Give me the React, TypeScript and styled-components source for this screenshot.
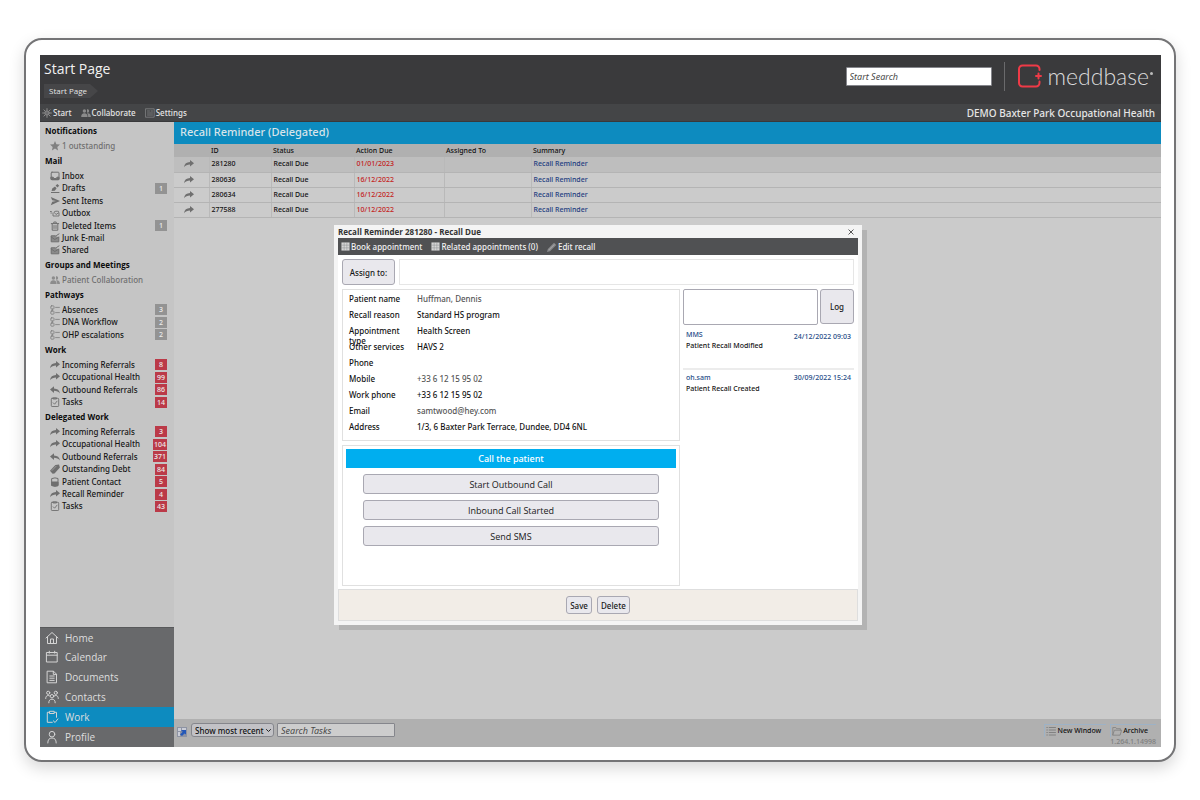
import React from "react";
import styled, { createGlobalStyle, css } from "styled-components";

const Global = createGlobalStyle`
  *, *::before, *::after { box-sizing: border-box; }
  body { margin: 0; background: #fff; font-family: "Open Sans", "Noto Sans", sans-serif; font-weight: 500; color: #111; }
  button, input, textarea, select { font-family: inherit; margin: 0; }
  h1, h2, h3, ul, dl, dd, dt, p { margin: 0; padding: 0; font-weight: inherit; }
  ul { list-style: none; }
  a { color: inherit; text-decoration: none; }
`;

const wide = css`font-family: "Noto Sans", "Open Sans", sans-serif;`;

const Page = styled.div`
  min-height: 100vh;
  padding: 38px 24px;
  display: flex;
`;
const Frame = styled.div`
  flex: 1;
  display: flex;
  padding: 15px 13px 13px 14px;
  border: 2px solid #747476;
  border-radius: 18px;
  background: #fff;
  box-shadow: 0 6px 16px rgba(0, 0, 0, 0.16);
`;
const AppShell = styled.div`
  flex: 1;
  position: relative;
  display: flex;
  flex-direction: column;
  min-width: 0;
  background: #cbcbcb;
`;

const Header = styled.header`
  display: flex;
  justify-content: space-between;
  height: 49px;
  padding: 0 8px 0 4px;
  background: #3a3a3c;
  color: #f2f2f2;
`;
const PageTitle = styled.h1`
  && { font-size: 14px; font-weight: 500; }
  line-height: 20px;
  padding-top: 4px;
  margin-bottom: 5px;
`;
const Crumb = styled.a`
  display: block;
  width: 54px;
  padding: 0 5px;
  font-size: 8px;
  line-height: 14px;
  background: #464648;
  color: #e4e4e4;
  clip-path: polygon(0 0, 46px 0, 100% 50%, 46px 100%, 0 100%);
`;
const HeaderRight = styled.div`
  display: flex;
  align-items: center;
  height: 42px;
`;
const TextInput = styled.input<{ $w: number; $h: number; $bg: string }>`
  width: ${p => p.$w}px;
  height: ${p => p.$h}px;
  padding: 0 3px;
  border: 1px solid #85868c;
  border-radius: 1px;
  background: ${p => p.$bg};
  ${wide}
  font-size: 9px;
  font-style: italic;
  &::placeholder { color: #4a4a4a; opacity: 1; }
`;
const Rule = styled.span`
  width: 1px;
  height: 29px;
  margin: 0 13px 0 12px;
  background: #6a6a6c;
`;
const Brand = styled.a`
  display: flex;
  align-items: center;
  gap: 6px;
  color: #dcdcdc;
  font-family: Lato, sans-serif;
  font-weight: 300;
  font-size: 23px;
  line-height: 28px;
`;
const BrandDot = styled.span`
  width: 3px;
  height: 3px;
  margin: 0 0 6px -5px;
  border-radius: 50%;
  background: #bbb;
`;

const MenuBar = styled.nav`
  display: flex;
  align-items: center;
  gap: 9px;
  height: 18px;
  padding: 0 6px 0 2px;
  background: #444547;
  border-bottom: 1px solid #39393b;
  color: #e6e6e6;
  ${wide}
  font-size: 8px;
  line-height: 16px;
`;
const MenuLink = styled.a`
  display: flex;
  align-items: center;
  gap: 1px;
`;
const Tenant = styled.span`
  margin-left: auto;
  font-size: 10px;
`;

const Columns = styled.div`
  flex: 1;
  display: flex;
`;
const Sidebar = styled.aside`
  width: 134px;
  flex: none;
  display: flex;
  flex-direction: column;
  justify-content: space-between;
  background: #c5c5c5;
`;
const GroupTitle = styled.h2`
  && { font-weight: 700; }
  padding-left: 5px;
  font-size: 8px;
  line-height: 17px;
  color: #0c0c0c;
`;
const Item = styled.li<{ $muted?: boolean }>`
  display: flex;
  align-items: center;
  height: 12px;
  padding: 0 7px 0 10px;
  ${wide}
  font-size: 8px;
  line-height: 12px;
  color: ${p => (p.$muted ? "#6f6f6f" : "#161616")};
  &:nth-child(odd) { height: 13px; }
  &:nth-child(7) { height: 12px; }
  svg { margin-right: 2px; }
  a { flex: 1; white-space: nowrap; }
`;
const Badge = styled.span<{ $red?: boolean }>`
  min-width: 12px;
  height: 11px;
  padding: 0 1px;
  font-size: 7px;
  line-height: 11px;
  text-align: center;
  color: #ececec;
  background: ${p => (p.$red ? "#bb3a48" : "#939393")};
`;
const MainNav = styled.nav`
  display: flex;
  flex-direction: column;
  background: #68696b;
  border-top: 1px solid #58595b;
`;
const NavLink = styled.a<{ $on?: boolean }>`
  display: flex;
  align-items: center;
  gap: 6px;
  height: 20px;
  padding-left: 5px;
  color: #dedede;
  font-size: 10px;
  &:first-child { height: 19px; }
  ${p => p.$on && css`background: #0d8bbf;`}
`;

const Main = styled.main`
  flex: 1;
  min-width: 0;
  display: flex;
  flex-direction: column;
`;
const ListTitle = styled.h2`
  && { font-size: 11px; }
  padding: 0 0 2px 6px;
  background: #0d8bbf;
  color: #d8e4ea;
  ${wide}
  line-height: 20px;
`;
const Table = styled.table`
  width: 100%;
  table-layout: fixed;
  border-collapse: collapse;
  ${wide}
  font-size: 7px;
  line-height: 12px;
  th { height: 13px; padding: 0 2px; font-weight: 500; text-align: left; background: #b0b0b0; }
  td { height: 15px; padding: 0 2px; border-bottom: 1px solid #b4b4b4; border-left: 1px solid #b9b9b9; }
  td:first-child { border-left: 0; padding-left: 10px; }
  tbody tr:first-child { background: #bebebe; }
  svg { display: block; }
`;
const Due = styled.td`color: #c31c1c;`;
const SummaryLink = styled.a`color: #1c3c80;`;

const Footer = styled.footer`
  display: flex;
  align-items: flex-start;
  height: 28px;
  margin-top: auto;
  padding: 4px 5px 0 3px;
  background: #b0b0b0;
  font-size: 8px;
  > svg { margin: 4px 4px 0 0; }
`;
const Filter = styled.select`
  appearance: none;
  width: 83px;
  height: 14px;
  margin-right: 3px;
  padding: 0 3px;
  border: 1px solid #85868c;
  border-radius: 3px;
  background: #c2c2c6;
  color: #111;
  ${wide}
  font-size: 8px;
  font-weight: 500;
`;
const FilterWrap = styled.label`
  position: relative;
  display: flex;
  svg { position: absolute; right: 6px; top: 5px; }
`;
const FootLinks = styled.div`
  margin-left: auto;
  display: grid;
  grid-template-columns: auto auto;
  column-gap: 4px;
  margin-top: 1px;
  ${wide}
  font-size: 7px;
`;
const FootLink = styled.a`
  display: flex;
  align-items: center;
  gap: 1px;
  padding: 0 5px 0 1px;
  border-top: 1px solid #9db2c6;
  border-left: 1px solid #9db2c6;
  line-height: 12px;
`;
const Version = styled.span`
  grid-column: 2;
  color: #7e7e7e;
  line-height: 9px;
`;

const Overlay = styled.div`
  position: absolute;
  inset: 0;
  display: flex;
  justify-content: center;
  align-items: flex-start;
  padding: 170px 5px 0 0;
`;
const Dialog = styled.section`
  width: 528px;
  padding: 0 4px 4px;
  background: #f4f4f4;
  box-shadow: 5px 5px 0 #b3b3b3;
  font-size: 8px;
`;
const DialogHead = styled.div`
  display: flex;
  justify-content: space-between;
  align-items: center;
  height: 13px;
`;
const DialogTitle = styled.h2`
  && { font-size: 8px; font-weight: 700; }
  color: #333;
  line-height: 13px;
`;
const Close = styled.button`
  padding: 0 4px;
  border: 0;
  background: none;
  line-height: 0;
`;
const DialogBar = styled.div`
  display: flex;
  align-items: center;
  gap: 9px;
  height: 17px;
  padding: 0 3px;
  background: #505153;
`;
const BarButton = styled.button`
  display: flex;
  align-items: center;
  gap: 1px;
  padding: 0;
  border: 0;
  background: none;
  color: #f2f2f2;
  ${wide}
  font-size: 8px;
  font-weight: 500;
`;
const DialogBody = styled.div`
  padding: 4px 4px 3px;
  background: #fff;
`;
const Button = styled.button`
  border: 1px solid #a9a8b2;
  border-radius: 3px;
  background: #e9e8ed;
  color: #181818;
  ${wide}
  font-size: 8px;
  font-weight: 500;
`;
const AssignRow = styled.div`
  display: flex;
  gap: 4px;
  margin-bottom: 4px;
`;
const AssignButton = styled(Button)`
  width: 53px;
  height: 26px;
  padding: 0;
`;
const AssignInput = styled.input`
  flex: 1;
  min-width: 0;
  border: 1px solid #e6e6e6;
`;
const Split = styled.div`
  display: grid;
  grid-template-columns: 338px minmax(0, 1fr);
  gap: 3px;
`;
const Stack = styled.div`
  display: flex;
  flex-direction: column;
  gap: 4px;
`;
const Details = styled.dl`
  padding: 3px 6px;
  border: 1px solid #e0e0e0;
  ${wide}
`;
const Detail = styled.div<{ $soft?: boolean }>`
  display: flex;
  height: 16px;
  padding-top: 1px;
  line-height: 10px;
  dt { width: 56px; margin-right: 12px; overflow: visible; }
  dd { color: ${p => (p.$soft ? "#555" : "#111")}; }
`;
const CallPanel = styled.section`
  display: flex;
  flex-direction: column;
  gap: 6px;
  min-height: 141px;
  padding: 3px;
  border: 1px solid #e0e0e0;
`;
const CallTitle = styled.h3`
  && { font-size: 9px; }
  background: #00aeef;
  color: #fff;
  ${wide}
  line-height: 19px;
  text-align: center;
`;
const CallButton = styled(Button)`
  height: 20px;
  margin: 0 17px;
  padding: 0;
  font-family: "Open Sans", "Noto Sans", sans-serif;
  font-size: 9px;
`;
const LogForm = styled.div`
  display: flex;
  gap: 2px;
  margin-bottom: 4px;
  textarea { flex: 1; min-width: 0; height: 36px; border: 1px solid #a9a8b2; border-radius: 2px; resize: none; }
`;
const LogButton = styled(Button)`
  width: 34px;
  height: 35px;
  padding: 0;
`;
const Entry = styled.li<{ $first?: boolean }>`
  display: grid;
  grid-template-columns: 1fr auto;
  align-content: start;
  height: ${p => (p.$first ? 41 : 30)}px;
  margin-bottom: 2px;
  padding: 0 3px;
  border-bottom: ${p => (p.$first ? "2px solid #ececec" : "0")};
  ${wide}
  font-size: 7px;
  line-height: 11px;
  a { color: #1d4a86; }
  p { grid-column: 1 / -1; }
`;
const Stamp = styled.time<{ $first?: boolean }>`
  height: 11px;
  padding-top: ${p => (p.$first ? 2 : 0)}px;
  color: #1d4a86;
`;
const DialogFoot = styled.div`
  display: flex;
  justify-content: center;
  align-items: center;
  gap: 5px;
  height: 32px;
  background: #f2ede7;
  border: 1px solid #dedede;
`;
const SmallButton = styled(Button)`
  height: 18px;
  padding: 0 3px;
`;

type GlyphProps = { size?: number; box?: string; color?: string; children: React.ReactNode; fill?: boolean; sw?: number };
const Glyph = ({ size = 10, box = "0 0 10 10", color = "#6f6f6f", fill, sw = 1, children }: GlyphProps) => (
  <svg width={size} height={size} viewBox={box} fill={fill ? color : "none"} stroke={fill ? "none" : color}
    strokeWidth={sw} strokeLinejoin="round" strokeLinecap="round" aria-hidden="true">{children}</svg>
);

const Forward = () => <Glyph fill><path d="M0 8.2C.4 4.8 2.6 3.1 6 3V1l4 3.3L6 7.6V5.4C3.5 5.400 1.4 6.200 0 8.200z" /></Glyph>;
const Back = () => <Glyph fill><path d="M10 8.600C9.600 5.200 7.400 3.500 4 3.400V1.200L0 4.600 4 8V5.800c2.500 0 4.600.8 6 2.800z" /></Glyph>;
const Star = () => <Glyph fill color="#808080"><path d="M5 0l1.400 3.300 3.600.3-2.700 2.400.8 3.500L5 7.600 1.900 9.500l.8-3.500L0 3.600l3.600-.3z" /></Glyph>;
const InboxIcon = () => <Glyph><rect x="1.200" y="1.200" width="7.800" height="7.600" rx=".8" /><path d="M1.200 6.200h2l.8 1.300h2.200L7 6.200h2v2.300H1.400z" fill="#6f6f6f" /></Glyph>;
const Pen = () => <Glyph fill><path d="M1 9h8.400v.9H1zM1.600 8l.6-2.600L5 3.600l1.600 1.600-1.800 2.500zM5.600 2.600L7.400.9l1.800 1.800-1.800 1.800z" /></Glyph>;
const Send = () => <Glyph fill><path d="M.8 1L10 5 .8 9.200l1.400-3.500L6 5 2.200 4.300z" /></Glyph>;
const OutIcon = () => <Glyph sw={0.9}><path d="M.4 3.500h1M.9 5h.6M3 5v3h6V4.500L6 6.500 4 4.200c1-1.200 2.500-1.200 4.500-.8" /></Glyph>;
const Trash = () => <Glyph><path d="M1.300 2.600h7.400M3.800 2.300V1h2.400v1.300M2.200 3v6.200h5.600V3M4 4.500v3M6 4.500v3" /></Glyph>;
const MailIcon = () => <Glyph><path d="M5.300 2.800H1.200v6h7.600V4.500" fill="#8a8a8a" /><path d="M1.200 4l3.600 2.500L8.800 4M6.500 2.500L9 .9" /></Glyph>;
const People = ({ c = "#8c8c8c" }: { c?: string }) => <Glyph fill color={c}><circle cx="3.400" cy="3" r="1.700" /><path d="M.2 9c0-2.600 1-3.700 3.200-3.700S6.600 6.400 6.600 9z" /><path d="M6 1.300a1.700 1.700 0 1 1 0 3.300zM7.200 9c0-1.600-.3-2.700-1.100-3.600C8.500 5 9.900 6.400 9.900 9z" /></Glyph>;
const Flow = () => <Glyph color="#7c7c7c" sw={0.8}><rect x=".8" y=".8" width="3.200" height="3.200" rx=".8" /><rect x=".8" y="6" width="3.200" height="3.200" rx=".8" /><path d="M2.400 4v2M5.600 2.400h3.800M5.600 7.600h3.800" /></Glyph>;
const TaskIcon = () => <Glyph sw={0.9}><rect x="1.300" y="1.300" width="7.400" height="8.200" rx=".8" /><path d="M3.500.8h3v1.200h-3zM3.200 5.800l1.400 1.400L7 4.200" /></Glyph>;
const Tag = () => <Glyph fill><path d="M0 6.800L5.400.9 9 .6l.9 3L4.500 9.400 2.600 9.700z" /><path d="M2 6.500l4-4.200" stroke="#c5c5c5" strokeWidth=".5" /></Glyph>;
const Phone = () => <Glyph><path d="M2 1.500Q5 .2 8 1.500V8.600Q5 9.800 2 8.600z" /><path d="M2 5h6v3.600Q5 9.800 2 8.600z" fill="#6f6f6f" /></Glyph>;
const Gear = () => <Glyph color="#8b8b8b"><circle cx="5" cy="5" r="2.200" fill="#6c6c6e" /><path d="M5 .6v1.600M5 7.800v1.600M.6 5h1.600M7.800 5h1.600M1.900 1.900L3 3M7 7l1.100 1.100M8.100 1.900L7 3M3 7L1.900 8.100" /></Glyph>;
const Form = () => <Glyph color="#77787a"><rect x=".8" y=".8" width="8.400" height="8.400" /><path d="M2.500 3h2M2.500 5h5M2.500 7h5M6 3h1.500" /></Glyph>;
const GridIcon = () => <Glyph fill color="#d6d6d6" size={9}><path d="M.5.5h9v9h-9z" /><path d="M.5 3.500h9M.5 6.500h9M3.500.5v9M6.500.5v9" stroke="#8e8f91" strokeWidth=".6" /></Glyph>;
const Pencil = () => <Glyph fill color="#87888a"><path d="M0 10l.8-3L7 .8 9.300 3 3 9.200z" /><path d="M2 7.800l5-5" stroke="#bbb" strokeWidth=".6" /></Glyph>;
const ListIcon = () => <Glyph color="#7d7d7d" sw={0.9}><path d="M.8 1.500h.6M.8 4h.6M.8 6.500h.6M.8 9h.6M3.200 1.500h6.300M3.200 4h6.300M3.200 6.500h6.300M3.200 9h6.300" /></Glyph>;
const Folder = () => <Glyph color="#808080" sw={0.8}><path d="M.8 8.800V1.500h3l.8 1.200h3.800v1.500M.8 8.800l1.600-4.600h7.200L8.200 8.800z" /></Glyph>;

const NavGlyph = ({ children }: { children: React.ReactNode }) => <Glyph size={14} box="0 0 14 14" color="#d4d4d4">{children}</Glyph>;
const navItems = [
  { label: "Home", icon: <><path d="M1 7l6-5.500L13 7M2.500 6v6.500h9V6" /><path d="M5.500 12.500V8h3v4.500" /></> },
  { label: "Calendar", icon: <path d="M1.800 2.500h10.400v9.500H1.800zM1.800 5.200h10.400M4.300 1.200v2M9.700 1.200v2" /> },
  { label: "Documents", icon: <path d="M2.500 1.200h6l3 3v8.600h-9zM8.300 1.400v3h3M4.800 6h4.400M4.800 8.200h4.400M4.800 10.400h4.400" /> },
  { label: "Contacts", icon: <><circle cx="3.200" cy="2.800" r="1.600" /><circle cx="10.800" cy="2.800" r="1.600" /><circle cx="7" cy="6.200" r="1.700" /><path d="M.7 8.500c0-2 1-3 2.500-3 .7 0 1.200.2 1.500.5M13.300 8.500c0-2-1-3-2.500-3-.7 0-1.200.2-1.500.5M3.800 12.800c0-2.400 1.100-3.600 3.200-3.600s3.200 1.200 3.200 3.600" /></> },
  { label: "Work", on: true, icon: <path d="M4.500 2.300H2.300v10h5M9.500 2.300h2v5M4.800 1.300h4.400v2.200H4.800zM8.300 10.800l1.800 1.700 2.800-3.600" /> },
  { label: "Profile", icon: <><circle cx="7" cy="4.200" r="2.800" /><path d="M2.800 13c0-3.400 1.400-5 4.200-5s4.200 1.600 4.200 5" /></> },
];

type Row = { label: string; icon: React.ReactNode; count?: number; muted?: boolean };
const groups: { title: string; red?: boolean; rows: Row[] }[] = [
  { title: "Notifications", rows: [{ label: "1 outstanding", icon: <Star />, muted: true }] },
  { title: "Mail", rows: [
    { label: "Inbox", icon: <InboxIcon /> }, { label: "Drafts", icon: <Pen />, count: 1 },
    { label: "Sent Items", icon: <Send /> }, { label: "Outbox", icon: <OutIcon /> },
    { label: "Deleted Items", icon: <Trash />, count: 1 }, { label: "Junk E-mail", icon: <MailIcon /> },
    { label: "Shared", icon: <MailIcon /> } ] },
  { title: "Groups and Meetings", rows: [{ label: "Patient Collaboration", icon: <People />, muted: true }] },
  { title: "Pathways", rows: [
    { label: "Absences", icon: <Flow />, count: 3 }, { label: "DNA Workflow", icon: <Flow />, count: 2 },
    { label: "OHP escalations", icon: <Flow />, count: 2 } ] },
  { title: "Work", red: true, rows: [
    { label: "Incoming Referrals", icon: <Forward />, count: 8 }, { label: "Occupational Health", icon: <Forward />, count: 99 },
    { label: "Outbound Referrals", icon: <Back />, count: 86 }, { label: "Tasks", icon: <TaskIcon />, count: 14 } ] },
  { title: "Delegated Work", red: true, rows: [
    { label: "Incoming Referrals", icon: <Forward />, count: 3 }, { label: "Occupational Health", icon: <Forward />, count: 104 },
    { label: "Outbound Referrals", icon: <Back />, count: 371 }, { label: "Outstanding Debt", icon: <Tag />, count: 84 },
    { label: "Patient Contact", icon: <Phone />, count: 5 }, { label: "Recall Reminder", icon: <Forward />, count: 4 },
    { label: "Tasks", icon: <TaskIcon />, count: 43 } ] },
];

const recalls = [["281280", "01/01/2023"], ["280636", "16/12/2022"], ["280634", "16/12/2022"], ["277588", "10/12/2022"]];

const details: [string, string, boolean?][] = [
  ["Patient name", "Huffman, Dennis", true], ["Recall reason", "Standard HS program"], ["Appointment type", "Health Screen"],
  ["Other services", "HAVS 2"], ["Phone", ""], ["Mobile", "+33 6 12 15 95 02", true], ["Work phone", "+33 6 12 15 95 02"],
  ["Email", "samtwood@hey.com", true], ["Address", "1/3, 6 Baxter Park Terrace, Dundee, DD4 6NL"],
];

export default function App() {
  return (
    <Page>
      <Global />
      <Frame>
        <AppShell>
          <Header>
            <div>
              <PageTitle>Start Page</PageTitle>
              <Crumb href="#">Start Page</Crumb>
            </div>
            <HeaderRight>
              <TextInput aria-label="Start Search" placeholder="Start Search" $w={146} $h={19} $bg="#fff" />
              <Rule />
              <Brand href="#">
                <Glyph size={24} box="0 0 24 24" color="#ee3a47" sw={2}>
                  <path d="M21.500 6V5a3.500 3.500 0 0 0-3.500-3.500H4.500A3.500 3.500 0 0 0 1 5v14a3.500 3.500 0 0 0 3.500 3.500H18a3.500 3.500 0 0 0 3.500-3.500v-1.500M20.500 9.500v5M18 12h5" />
                </Glyph>
                meddbase
                <BrandDot />
              </Brand>
            </HeaderRight>
          </Header>
          <MenuBar>
            <MenuLink href="#"><Gear />Start</MenuLink>
            <MenuLink href="#"><People c="#8b8b8b" />Collaborate</MenuLink>
            <MenuLink href="#"><Form />Settings</MenuLink>
            <Tenant>DEMO Baxter Park Occupational Health</Tenant>
          </MenuBar>
          <Columns>
            <Sidebar>
              <div>
                {groups.map(g => (
                  <section key={g.title}>
                    <GroupTitle>{g.title}</GroupTitle>
                    <ul>
                      {g.rows.map(r => (
                        <Item key={r.label} $muted={r.muted}>
                          {r.icon}<a href="#">{r.label}</a>
                          {r.count !== undefined && <Badge $red={g.red}>{r.count}</Badge>}
                        </Item>
                      ))}
                    </ul>
                  </section>
                ))}
              </div>
              <MainNav>
                {navItems.map(n => (
                  <NavLink key={n.label} href="#" $on={n.on}><NavGlyph>{n.icon}</NavGlyph>{n.label}</NavLink>
                ))}
              </MainNav>
            </Sidebar>
            <Main>
              <ListTitle>Recall Reminder (Delegated)</ListTitle>
              <Table>
                <colgroup>
                  <col width="35" /><col width="62" /><col width="83" /><col width="90" /><col width="87" /><col />
                </colgroup>
                <thead>
                  <tr><th /><th>ID</th><th>Status</th><th>Action Due</th><th>Assigned To</th><th>Summary</th></tr>
                </thead>
                <tbody>
                  {recalls.map(([id, due]) => (
                    <tr key={id}>
                      <td><Forward /></td><td>{id}</td><td>Recall Due</td><Due>{due}</Due><td />
                      <td><SummaryLink href="#">Recall Reminder</SummaryLink></td>
                    </tr>
                  ))}
                </tbody>
              </Table>
              <Footer>
                <Glyph size={10} fill color="#8d93a3"><path d="M0 0h10v10H0z" /><path d="M1 1h3v3H1zM5 1h4v2H5zM1 5h2v4H1z" fill="#c9ccd6" /><path d="M3 7.500L6 4.500H4.500V3H9v4.500L7.500 6.500 5 9z" fill="#2458b8" /></Glyph>
                <FilterWrap>
                  <Filter aria-label="Filter"><option>Show most recent</option></Filter>
                  <Glyph size={5} box="0 0 5 5" color="#222"><path d="M.5 1.500l2 2 2-2" /></Glyph>
                </FilterWrap>
                <TextInput aria-label="Search Tasks" placeholder="Search Tasks" $w={118} $h={14} $bg="#cdcdcd" />
                <FootLinks>
                  <FootLink href="#"><ListIcon />New Window</FootLink>
                  <FootLink href="#"><Folder />Archive</FootLink>
                  <Version>1.264.1.14998</Version>
                </FootLinks>
              </Footer>
            </Main>
          </Columns>
          <Overlay>
            <Dialog role="dialog" aria-labelledby="dialog-title">
              <DialogHead>
                <DialogTitle id="dialog-title">Recall Reminder 281280 - Recall Due</DialogTitle>
                <Close aria-label="Close"><Glyph size={6} box="0 0 6 6" color="#555"><path d="M.8.8l4.400 4.400M5.200.8L.8 5.200" /></Glyph></Close>
              </DialogHead>
              <DialogBar>
                <BarButton><GridIcon />Book appointment</BarButton>
                <BarButton><GridIcon />Related appointments (0)</BarButton>
                <BarButton><Pencil />Edit recall</BarButton>
              </DialogBar>
              <DialogBody>
                <AssignRow>
                  <AssignButton>Assign to:</AssignButton>
                  <AssignInput aria-label="Assign to" />
                </AssignRow>
                <Split>
                  <Stack>
                    <Details>
                      {details.map(([k, v, soft]) => (
                        <Detail key={k} $soft={soft}><dt>{k}</dt><dd>{v}</dd></Detail>
                      ))}
                    </Details>
                    <CallPanel>
                      <CallTitle>Call the patient</CallTitle>
                      <CallButton>Start Outbound Call</CallButton>
                      <CallButton>Inbound Call Started</CallButton>
                      <CallButton>Send SMS</CallButton>
                    </CallPanel>
                  </Stack>
                  <div>
                    <LogForm>
                      <textarea aria-label="Log entry" />
                      <LogButton>Log</LogButton>
                    </LogForm>
                    <ul>
                      <Entry $first><a href="#">MMS</a><Stamp $first>24/12/2022 09:03</Stamp><p>Patient Recall Modified</p></Entry>
                      <Entry><a href="#">oh.sam</a><Stamp>30/09/2022 15:24</Stamp><p>Patient Recall Created</p></Entry>
                    </ul>
                  </div>
                </Split>
              </DialogBody>
              <DialogFoot>
                <SmallButton>Save</SmallButton>
                <SmallButton>Delete</SmallButton>
              </DialogFoot>
            </Dialog>
          </Overlay>
        </AppShell>
      </Frame>
    </Page>
  );
}
